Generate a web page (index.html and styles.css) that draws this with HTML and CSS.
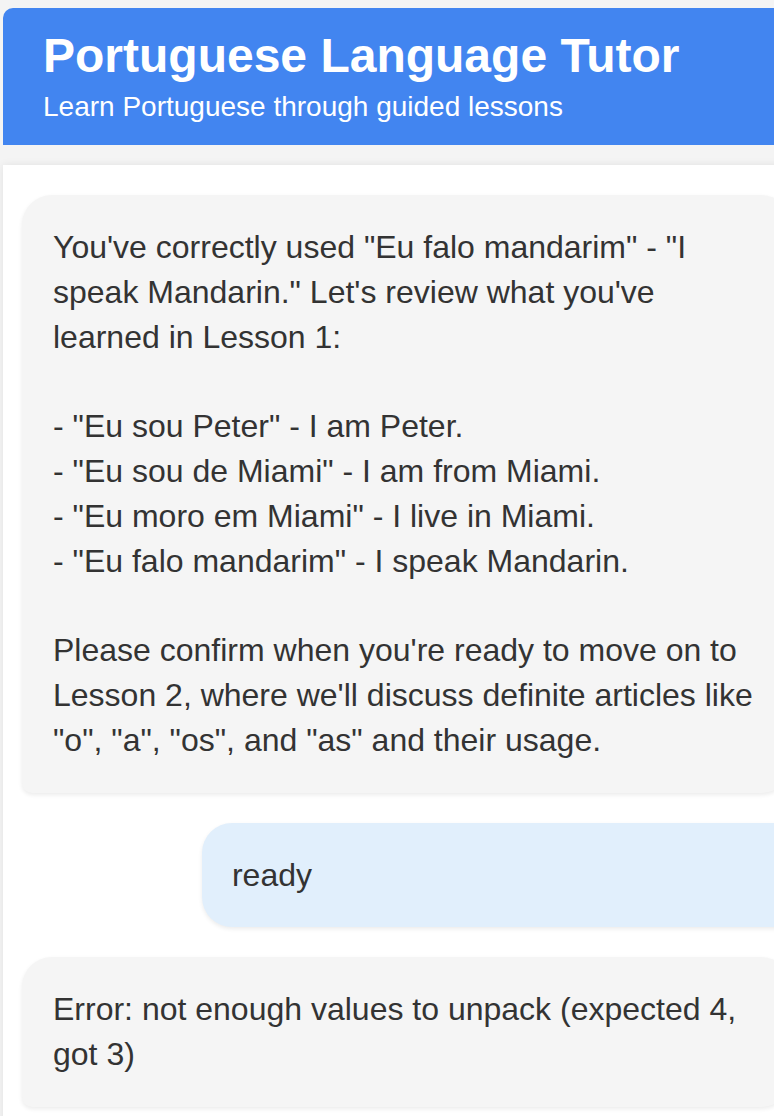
FILE: index.html
```html
<!DOCTYPE html>
<html lang="en">
<head>
<meta charset="utf-8">
<title>Portuguese Language Tutor</title>
<link rel="stylesheet" href="styles.css">
</head>
<body>
<div class="app">
  <header class="header">
    <h1 class="title">Portuguese Language Tutor</h1>
    <p class="subtitle">Learn Portuguese through guided lessons</p>
  </header>
  <main class="chat">
    <div class="msg assistant">You've correctly used "Eu falo mandarim" - "I speak Mandarin." Let's review what you've learned in Lesson 1:

- "Eu sou Peter" - I am Peter.
- "Eu sou de Miami" - I am from Miami.
- "Eu moro em Miami" - I live in Miami.
- "Eu falo mandarim" - I speak Mandarin.

Please confirm when you're ready to move on to Lesson 2, where we'll discuss definite articles like "o", "a", "os", and "as" and their usage.</div>
    <div class="msg user">ready</div>
    <div class="msg assistant">Error: not enough values to unpack (expected 4, got 3)</div>
  </main>
</div>
</body>
</html>
```
FILE: styles.css
```css
html, body {
  margin: 0;
  overflow: hidden;
}
body {
  background: #f4f4f4;
  padding: 8px 0 0 3px;
  font-family: "Liberation Sans", Arial, sans-serif;
  color: #333;
}
.app {
  width: 980px;
}
.header {
  background: #4285f0;
  color: #fff;
  border-radius: 10px 10px 0 0;
  padding: 20px 40px 22px;
}
.title {
  margin: 0;
  font-size: 48px;
  line-height: 56px;
  font-weight: bold;
}
.subtitle {
  margin: 7px 0 0;
  font-size: 28px;
  line-height: 32px;
}
.chat {
  margin-top: 20px;
  background: #fff;
  box-shadow: 0 0 8px rgba(0, 0, 0, 0.08);
  padding: 30px 19px;
  display: flex;
  flex-direction: column;
  gap: 30px;
  min-height: 1000px;
}
.msg {
  font-size: 32px;
  line-height: 1.4;
  padding: 30px 30px 30px 31px;
  white-space: pre-wrap;
  box-shadow: 0 2px 4px rgba(0, 0, 0, 0.08);
}
.assistant {
  background: #f5f5f5;
  margin-right: 18.35%;
  border-radius: 30px 30px 30px 10px;
}
.user {
  background: #e1effc;
  margin-left: 19.1%;
  padding-left: 30px;
  border-radius: 30px 30px 10px 30px;
}
```
